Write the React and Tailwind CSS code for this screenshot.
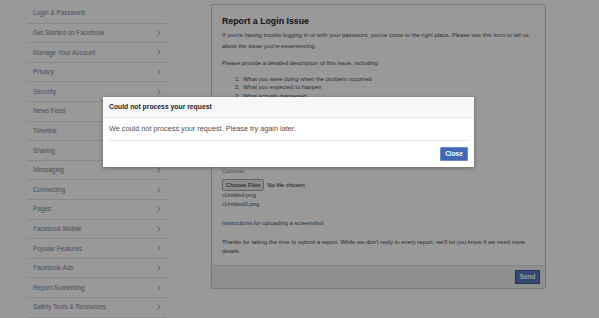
import React from 'react';

const topics = [
  'Login & Password',
  'Get Started on Facebook',
  'Manage Your Account',
  'Privacy',
  'Security',
  'News Feed',
  'Timeline',
  'Sharing',
  'Messaging',
  'Connecting',
  'Pages',
  'Facebook Mobile',
  'Popular Features',
  'Facebook Ads',
  'Report Something',
  'Safety Tools & Resources',
];

function Chevron() {
  return (
    <svg width="4" height="6" viewBox="0 0 4 6" className="shrink-0">
      <path d="M0.5 0.5 L3.2 3 L0.5 5.5" fill="none" stroke="#9aa0ab" strokeWidth="0.9" />
    </svg>
  );
}

function Sidebar() {
  return (
    <div className="w-[139px] ml-[28px] mt-[4px] shrink-0">
      {topics.map((t, i) => (
        <div
          key={t}
          className="h-[19.6px] flex items-center justify-between pl-[5px] pr-[6px] border-b border-[#e3e5e8]"
        >
          <span className="text-[6.4px] text-[#7a84a0]">{t}</span>
          {i > 0 && <Chevron />}
        </div>
      ))}
    </div>
  );
}

function ReportPanel() {
  return (
    <div className="ml-[44px] mt-[4px] w-[335px] h-[285px] border border-[#c9c9c9] rounded-[2px] bg-white flex flex-col text-[#4b4f56]">
      <div className="flex-1 px-[10px] pt-[10px] text-[5.9px] leading-[11px]">
        <div className="text-[8.8px] font-bold text-[#1d2129] leading-[12px] mb-[2.5px]">Report a Login Issue</div>
        <p>
          If you're having trouble logging in or with your password, you've come to the right place. Please use this form to tell us about the issue you're experiencing.
        </p>
        <p className="mt-[6px]">Please provide a detailed description of this issue, including:</p>
        <ol className="mt-[6px] pl-[13px] leading-[8.6px]">
          <li>1.&nbsp; What you were doing when the problem occurred</li>
          <li>2.&nbsp; What you expected to happen</li>
          <li>3.&nbsp; What actually happened</li>
        </ol>
        <div className="h-[66px]" />
        <div className="text-[#90949c]">Optional</div>
        <div className="flex items-center mt-[2px] leading-[9px]">
          <span className="h-[12px] px-[3px] flex items-center border border-[#a9a9a9] rounded-[2px] bg-[#ececec] text-[#1d2129]">Choose Files</span>
          <span className="ml-[3px] text-[#1d2129]">No file chosen</span>
        </div>
        <div className="leading-[9px]">
          <div><span className="text-[#6f87b8] text-[5px]">x</span>Untitled.png</div>
          <div><span className="text-[#6f87b8] text-[5px]">x</span>Untitled2.png</div>
        </div>
        <div className="mt-[9px] text-[#42598f]">Instructions for uploading a screenshot</div>
        <p className="mt-[9px] leading-[9px]">
          Thanks for taking the time to submit a report. While we don't reply to every report, we'll let you know if we need more details.
        </p>
      </div>
      <div className="h-[23px] bg-[#efefef] border-t border-[#dcdcdc] flex items-center justify-end pr-[5px]">
        <span className="h-[14px] w-[25px] flex items-center justify-center bg-[#5b7bc0] border border-[#3b5a9a] text-white text-[6.5px] font-bold">Send</span>
      </div>
    </div>
  );
}

function Dialog() {
  return (
    <div className="absolute left-[103px] top-[97px] w-[371px] bg-white shadow-[0_1px_4px_rgba(0,0,0,0.35)] text-[#1d2129]">
      <div className="h-[21px] bg-[#f6f7f9] border-b border-[#e5e5e5] flex items-center px-[6px]">
        <span className="text-[6.8px] font-bold text-[#1d2129]">Could not process your request</span>
      </div>
      <div className="mx-[6px] h-[23px] flex items-center border-b border-[#e5e5e5]">
        <span className="text-[7.3px] text-[#4b4f56]">We could not process your request. Please try again later.</span>
      </div>
      <div className="h-[26px] flex items-center justify-end pr-[6px]">
        <span className="h-[14px] w-[28px] flex items-center justify-center bg-[#4267b2] border border-[#6d8ad0] rounded-[1px] text-white text-[6.5px] font-bold">Close</span>
      </div>
    </div>
  );
}

export default function App() {
  return (
    <div className="relative w-[599px] h-[318px] overflow-hidden bg-white" style={{ fontFamily: '"Liberation Sans", Arial, sans-serif' }}>
      <div className="flex">
        <Sidebar />
        <ReportPanel />
      </div>
      <div className="absolute inset-0 bg-black/40" />
      <Dialog />
    </div>
  );
}
